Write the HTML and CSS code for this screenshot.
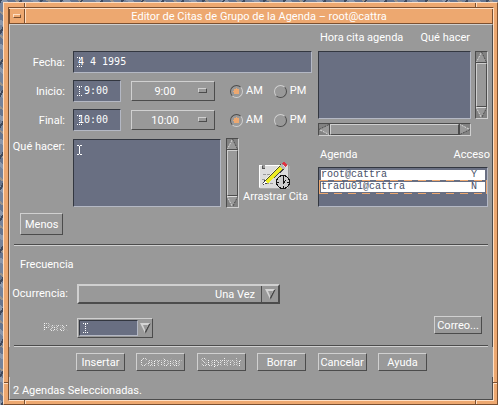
FILE: index.html
```html
<!DOCTYPE html>
<html lang="es">
<head>
<meta charset="utf-8">
<title>Editor de Citas de Grupo de la Agenda</title>
<link rel="stylesheet" href="styles.css">
</head>
<body>
<svg class="defs" aria-hidden="true">
  <symbol id="caret" viewBox="0 0 5 10"><path d="M0 .5H2M3 .5H5M0 9.5H2M3 9.5H5M2.5 1V9" stroke="#fff" fill="none"/></symbol>
  <symbol id="caret-dots" viewBox="0 0 5 10"><path d="M0 .5H5M0 9.5H5" stroke="#fff" stroke-dasharray="1 1"/><path d="M2.5 1V9" stroke="#fff" stroke-dasharray="1 1"/></symbol>
  <symbol id="tri-up" viewBox="0 0 11 11"><path d="M5.5 0L11 11H0Z" fill="#999"/><path d="M0 11L5.500 0" stroke="#ddd" stroke-dasharray="2 1"/><path d="M5.500 0L11 11" stroke="#4c4c4c" stroke-dasharray="2 1"/><path d="M0 10.500H11" stroke="#4c4c4c"/></symbol>
  <symbol id="tri-down" viewBox="0 0 11 11"><path d="M0 0H11L5.500 11Z" fill="#999"/><path d="M0 .5H11" stroke="#ddd"/><path d="M0 0L5.500 11" stroke="#ddd" stroke-dasharray="2 1"/><path d="M11 0L5.500 11" stroke="#4c4c4c" stroke-dasharray="2 1"/></symbol>
  <symbol id="drop" viewBox="0 0 11 11"><path d="M0 0H11L5.500 11Z" fill="#d4d4d4"/><path d="M11 0L5.500 11L5 8L9 1Z" fill="#444"/><path d="M3 2H8L5.500 8Z" fill="#999"/></symbol>
</svg>
<main class="window">
  <i class="notch top left"></i><i class="notch top right"></i>
  <i class="notch bottom left"></i><i class="notch bottom right"></i>
  <i class="notch side left"></i><i class="notch side right"></i>
  <div class="inner">
    <header class="titlebar">
      <button class="window-menu" aria-label="Menú de ventana"><i></i></button>
      <h1>Editor de Citas de Grupo de la Agenda – root@cattra</h1>
    </header>

    <section class="client">
      <div class="upper">
        <div class="form">
          <label for="fecha">Fecha:</label>
          <div class="field"><input id="fecha" value="4 4 1995"><svg class="caret"><use href="#caret-dots"/></svg></div>

          <label for="inicio">Inicio:</label>
          <div class="time">
            <div class="field short"><input id="inicio" value=" 9:00"><svg class="caret"><use href="#caret-dots"/></svg></div>
            <div class="option"><select aria-label="Hora de inicio"><option>9:00</option></select><i></i></div>
            <div class="radios">
              <label><input type="radio" name="inicio" checked>AM</label>
              <label><input type="radio" name="inicio">PM</label>
            </div>
          </div>

          <label for="final">Final:</label>
          <div class="time">
            <div class="field short"><input id="final" value="10:00"><svg class="caret"><use href="#caret-dots"/></svg></div>
            <div class="option"><select aria-label="Hora final"><option>10:00</option></select><i></i></div>
            <div class="radios">
              <label><input type="radio" name="final" checked>AM</label>
              <label><input type="radio" name="final">PM</label>
            </div>
          </div>

          <label class="top-label" for="que">Qué hacer:</label>
          <div class="notes">
            <div class="field area"><textarea id="que"></textarea><svg class="caret"><use href="#caret"/></svg></div>
            <div class="scroll vertical"><svg><use href="#tri-up"/></svg><span></span><svg><use href="#tri-down"/></svg></div>
            <figure class="drag">
              <svg width="31" height="28" viewBox="0 0 31 28" shape-rendering="crispEdges">
                <path d="M0 3H3V6H6V3H29V26H0Z" fill="#ddd"/>
                <path d="M0 3H3M6 3H24M0 3V25" stroke="#fff" fill="none"/>
                <path d="M1 26.500H30V4" stroke="#aaa" fill="none"/>
                <path d="M3 4V6H6" stroke="#555" fill="none"/>
                <path d="M4 12.500H14M3 17.500H11M3 21.500H15M16 12.500H20" stroke="#999" stroke-dasharray="3 1"/>
                <path d="M4 23L5 18L22 2L27 6L9 21Z" fill="#444"/>
                <path d="M6 19L21 4L25 6L9 21Z" fill="#ee2"/>
                <path d="M6 18L21 3" stroke="#ffc"/>
                <path d="M4 22L6 19L8 21Z" fill="#fff"/>
                <path d="M20 4L22 2L27 6L24 7Z" fill="#bbb"/>
                <path d="M23 1L25 0L28 3L26 5Z" fill="#d34"/>
                <circle cx="24" cy="20" r="6.500" fill="#ccc" stroke="#111"/>
                <path d="M24.500 15V21L27 18M24 14V16M24 24V26M18 20H20M28 20H30" stroke="#111" fill="none"/>
              </svg>
              <figcaption>Arrastrar Cita</figcaption>
            </figure>
          </div>
        </div>

        <div class="lists">
          <div class="list-head"><span>Hora cita agenda</span><span>Qué hacer</span></div>
          <div class="appointments">
            <div class="listbox" role="listbox" aria-label="Citas"></div>
            <div class="scroll vertical"><svg><use href="#tri-up"/></svg><span></span><svg><use href="#tri-down"/></svg></div>
            <div class="scroll horizontal"><svg class="west"><use href="#tri-up"/></svg><span></span><svg class="east"><use href="#tri-up"/></svg></div>
          </div>
          <table class="agendas">
            <thead><tr><th>Agenda</th><th>Acceso</th></tr></thead>
            <tbody>
              <tr><td>root@cattra</td><td>Y</td></tr>
              <tr class="focused"><td>tradu01@cattra</td><td>N</td></tr>
            </tbody>
          </table>
        </div>
      </div>

      <button class="btn less">Menos</button>
      <hr>

      <h2>Frecuencia</h2>
      <div class="frequency">
        <label for="ocurrencia">Ocurrencia:</label>
        <div class="combo large"><select id="ocurrencia"><option>Una Vez</option></select><span class="arrow"><svg><use href="#drop"/></svg></span></div>
        <label class="dim" for="para">Para:</label>
        <div class="last">
          <div class="combo small">
            <div class="field"><input id="para" disabled><svg class="caret"><use href="#caret-dots"/></svg></div>
            <button class="arrow" aria-label="Abrir lista" disabled><svg><use href="#drop"/></svg></button>
          </div>
          <button class="btn mail">Correo...</button>
        </div>
      </div>
      <hr>
    </section>

    <nav class="actions">
      <button class="btn">Insertar</button>
      <button class="btn" disabled><span class="dim">Cambiar</span></button>
      <button class="btn" disabled><span class="dim">Suprimir</span></button>
      <button class="btn">Borrar</button>
      <button class="btn">Cancelar</button>
      <button class="btn">Ayuda</button>
    </nav>
    <footer class="status">2 Agendas Seleccionadas.</footer>
  </div>
</main>
</body>
</html>
```
FILE: styles.css
```css
:root {
  --gray: #999;
  --light: #d0d0d0;
  --dark: #4c4c4c;
  --slate: #696f82;
  --slate-dark: #333740;
  --slate-light: #b4b8c4;
  --orange: #eda870;
  --cream: #ffdfc4;
  --brown: #7c5030;
}

* { box-sizing: border-box; }

body {
  margin: 0;
  padding: 2px 0 0 3px;
  min-height: 100vh;
  display: flex;
  font: 11px/14px Roboto, "Liberation Sans", sans-serif;
  color: #fff;
  background:
    repeating-linear-gradient(123deg, #3f495c 0 2px, transparent 2px 17px),
    repeating-linear-gradient(37deg, #8c98ac 0 4px, #66758f 4px 9px, #9a938c 9px 11px, #75839b 11px 19px);
}

.defs { display: none; }
h1, h2, figure { margin: 0; }
h1, h2, th { font: inherit; }

button, input, select, textarea {
  appearance: none;
  margin: 0;
  padding: 0;
  border: 0;
  border-radius: 0;
  outline: 0;
  background: none;
  color: inherit;
  font: inherit;
}

/* Window frame */
.window {
  position: relative;
  flex: 1;
  display: flex;
  padding: 4px 3px 3px 4px;
  background: var(--orange);
  border: 1px solid;
  border-color: var(--cream) var(--brown) var(--brown) var(--cream);
}

.inner {
  flex: 1;
  display: flex;
  flex-direction: column;
  background: var(--gray);
  border: 1px solid;
  border-color: var(--brown) var(--cream) var(--cream) var(--brown);
}

.notch { position: absolute; background: var(--cream); }
.notch.top, .notch.bottom { width: 2px; height: 4px; border-left: 1px solid var(--brown); }
.notch.top { top: 0; }
.notch.bottom { bottom: 0; }
.notch.top.left, .notch.bottom.left { left: 20px; }
.notch.top.right, .notch.bottom.right { right: 20px; }
.notch.side { bottom: 20px; width: 4px; height: 2px; border-top: 1px solid var(--brown); }
.notch.side.left { left: 0; }
.notch.side.right { right: 0; }

.titlebar {
  display: flex;
  height: 16px;
  background: var(--orange);
  border-top: 1px solid var(--cream);
  border-bottom: 1px solid var(--brown);
}

.titlebar h1 {
  flex: 1;
  padding-top: 1px;
  line-height: 13px;
  text-align: center;
  border-left: 1px solid var(--cream);
  border-right: 1px solid var(--brown);
}

.window-menu {
  width: 16px;
  display: flex;
  align-items: center;
  justify-content: center;
  border: 0 solid;
  border-width: 0 1px;
  border-color: var(--cream) var(--brown);
}

.window-menu i {
  width: 8px;
  height: 4px;
  border: 1px solid;
  border-color: var(--cream) var(--brown) var(--brown) var(--cream);
}

/* Client area */
.client {
  padding: 0 4px;
  border: 1px solid;
  border-color: var(--light) var(--dark) transparent var(--light);
  border-bottom: 0;
}

.upper {
  display: grid;
  grid-template-columns: 298fr 170fr;
  gap: 6px;
}

.form {
  display: grid;
  grid-template-columns: 52px 1fr;
  grid-template-rows: 22px 22px 22px auto;
  gap: 7px;
  padding-top: 26px;
  align-items: center;
}

.form > label { padding: 2px 1px 0 0; text-align: right; white-space: nowrap; }
.form > .top-label { align-self: start; justify-self: end; }

.field, .listbox {
  position: relative;
  background: var(--slate);
  border: 1px solid;
  border-color: var(--slate-dark) var(--slate-light) var(--slate-light) var(--slate-dark);
}

.field input, .field textarea {
  display: block;
  width: 100%;
  height: 20px;
  padding: 0 4px;
  font: 10px/20px "DejaVu Sans Mono", monospace;
  resize: none;
}

.field.area { flex: 1; }
.field.area textarea { height: 66px; }
.field.short { width: 48px; }

.caret {
  position: absolute;
  left: 3px;
  top: 5px;
  width: 5px;
  height: 10px;
}

.time, .notes { display: flex; align-items: center; }

.option { position: relative; width: 84px; margin: 0 15px 0 10px; }

.option select {
  display: block;
  width: 100%;
  height: 20px;
  padding: 2px 16px 0 0;
  text-align-last: center;
  border: 1px solid;
  border-color: var(--light) var(--dark) var(--dark) var(--light);
}

.option i {
  position: absolute;
  right: 8px;
  top: 7px;
  width: 9px;
  height: 5px;
  border: 1px solid;
  border-color: var(--light) var(--dark) var(--dark) var(--light);
}

.radios { display: flex; gap: 11px; }
.radios label { display: flex; align-items: center; gap: 3px; }

.radios input {
  width: 13px;
  height: 13px;
  border: 1px solid;
  border-color: var(--light) var(--dark) var(--dark) var(--light);
  border-radius: 50%;
}

.radios input:checked {
  border-color: var(--dark) var(--light) var(--light) var(--dark);
  background: radial-gradient(circle, var(--orange) 3px, transparent 3px);
}

.drag {
  flex: none;
  width: 73px;
  padding: 20px 6px 0 4px;
  text-align: center;
  white-space: nowrap;
}
.drag svg { display: block; margin: 0 auto; }

/* Scroll bars */
.scroll {
  display: flex;
  background: #828282;
  border: 1px solid;
  border-color: var(--dark) var(--light) var(--light) var(--dark);
}

.scroll svg { width: 11px; height: 11px; flex: none; }

.scroll span {
  flex: 1;
  background: var(--gray);
  border: 1px solid;
  border-color: var(--light) var(--dark) var(--dark) var(--light);
}

.scroll.vertical { flex-direction: column; width: 13px; }
.notes .scroll { height: 70px; margin: -1px 0 -1px 5px; }
.scroll .west { transform: rotate(-90deg); }
.scroll .east { transform: rotate(90deg); }

/* Lists */
.list-head { display: flex; height: 26px; padding: 6px 18px 0 2px; justify-content: space-between; }

.appointments {
  display: grid;
  grid-template: 68px 13px / 1fr 13px;
  gap: 4px;
}

.agendas, .agendas thead, .agendas tbody { display: block; }
.agendas tr { display: flex; justify-content: space-between; }
.agendas th, .agendas td { padding: 0; }
.agendas thead tr { height: 31px; margin-right: -2px; padding: 12px 0 0 2px; }

.agendas tbody {
  height: 40px;
  padding: 2px 0;
  background: var(--slate);
  border: 1px solid;
  border-color: var(--slate-dark) var(--slate-light) var(--slate-light) var(--slate-dark);
  font: 10px/10px "Liberation Mono", monospace;
  color: #464e66;
}

.agendas tbody tr { height: 10px; margin: 0 2px; padding: 0 8px 0 0; background: #fff; }

.agendas tbody .focused {
  height: 14px;
  margin: 0;
  padding: 2px 9px 2px 1px;
  background:
    repeating-linear-gradient(90deg, var(--orange) 0 8px, transparent 8px 14px) top / 100% 1px no-repeat,
    repeating-linear-gradient(90deg, var(--orange) 0 8px, transparent 8px 14px) bottom / 100% 1px no-repeat,
    linear-gradient(#fff, #fff) center / calc(100% - 2px) 10px no-repeat,
    var(--slate);
  border: solid var(--orange);
  border-width: 0 1px;
}

/* Buttons */
.btn {
  display: block;
  height: 18px;
  padding: 2px 1px 0;
  border: 1px solid;
  border-color: var(--light) var(--dark) var(--dark) var(--light);
}

.less { height: 22px; margin: 6px 0 9px 6px; padding: 2px 4px 0; }

hr {
  height: 2px;
  margin: 0;
  border: 0;
  border-top: 1px solid var(--dark);
  border-bottom: 1px solid var(--light);
}

/* Stippled text for unavailable items */
.dim {
  color: transparent;
  background: repeating-conic-gradient(#fff 0 25%, #999 0 50%) 0 0 / 2px 2px;
  background-clip: text;
  -webkit-background-clip: text;
}

/* Frequency */
h2 { margin: 12px 0 12px 6px; }

.frequency {
  display: grid;
  grid-template-columns: 54px 1fr;
  column-gap: 9px;
  row-gap: 14px;
  align-items: center;
  padding-bottom: 7px;
}

.frequency > label { justify-self: end; }

.combo {
  position: relative;
  display: flex;
  width: 203px;
  height: 20px;
  border: 1px solid;
  border-color: var(--light) var(--dark) var(--dark) var(--light);
}

.combo.large { border-width: 2px; }
.combo select { flex: 1; padding: 2px 6px 0 0; text-align-last: right; }

.arrow {
  width: 17px;
  display: flex;
  align-items: center;
  justify-content: center;
  border-left: 1px solid var(--dark);
}

.arrow svg { width: 11px; height: 11px; }
.combo.small { width: 76px; }
.combo.small .field { flex: 1; margin: 1px; }
.combo.small input { height: 14px; }
.combo.small .caret { top: 2px; }
.combo.small .arrow { width: 13px; border: 0; }

.last { display: flex; justify-content: space-between; }
.mail { width: 48px; margin: -2px 6px 0 0; }

/* Bottom rows */
.actions { display: flex; justify-content: space-between; padding: 6px 66px 6px 67px; }
.actions .btn { width: 49px; flex: none; }

.status {
  flex: 1;
  padding: 7px 3px 1px;
  border: 1px solid;
  border-color: transparent var(--dark) var(--dark) var(--light);
  border-top: 0;
}
```
